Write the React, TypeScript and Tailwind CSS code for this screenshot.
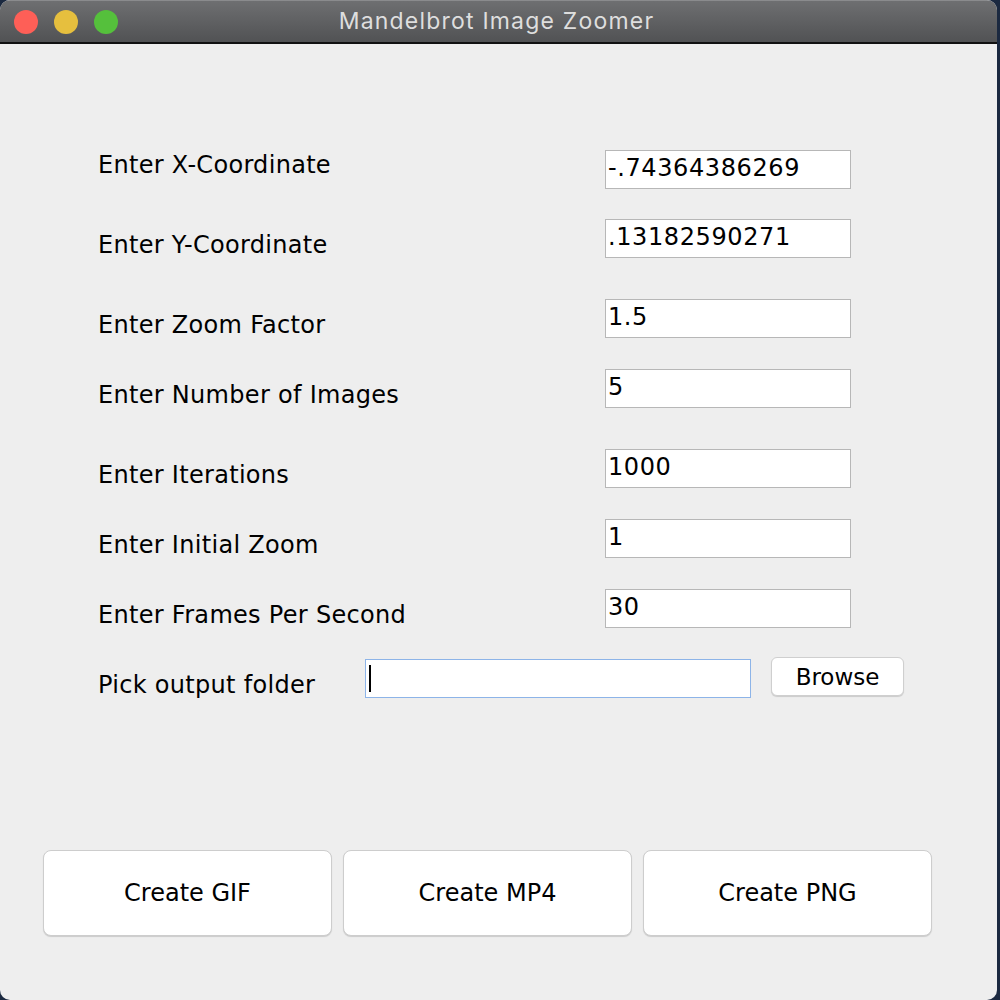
import React from 'react';

const fields = [
  { label: 'Enter X-Coordinate', value: '-.74364386269', gap: 'mt-0', nudge: 'pt-[1px]' },
  { label: 'Enter Y-Coordinate', value: '.13182590271', gap: 'mt-[30px]', nudge: 'pt-[12px]' },
  { label: 'Enter Zoom Factor', value: '1.5', gap: 'mt-[41px]', nudge: 'pt-[12px]' },
  { label: 'Enter Number of Images', value: '5', gap: 'mt-[31px]', nudge: 'pt-[12px]' },
  { label: 'Enter Iterations', value: '1000', gap: 'mt-[41px]', nudge: 'pt-[12px]' },
  { label: 'Enter Initial Zoom', value: '1', gap: 'mt-[31px]', nudge: 'pt-[12px]' },
  { label: 'Enter Frames Per Second', value: '30', gap: 'mt-[31px]', nudge: 'pt-[12px]' },
];

const App = () => {
  return (
    <div className="w-[1000px] h-[1000px] bg-[#1b2940] font-['DejaVu_Sans',sans-serif] text-black">
      <div className="w-[997px] h-[1000px] rounded-[10px] overflow-hidden bg-[#eeeeee] flex flex-col">
        {/* title bar */}
        <div className="h-[44px] shrink-0 grid grid-cols-[1fr_auto_1fr] items-center bg-gradient-to-b from-[#6e6f71] to-[#515254] border-t border-t-[#8a8b8d] border-b-2 border-b-[#111]">
          <div className="flex items-center gap-[16px] pl-[14px]">
            <span className="w-[24px] h-[24px] rounded-full bg-[#fe5f57]" />
            <span className="w-[24px] h-[24px] rounded-full bg-[#e6bf3e]" />
            <span className="w-[24px] h-[24px] rounded-full bg-[#55c03c]" />
          </div>
          <div className="font-['Inter',sans-serif] text-[23px] tracking-[1.2px] text-[#dedede] pr-[4px]">Mandelbrot Image Zoomer</div>
          <div />
        </div>

        {/* form */}
        <div className="pt-[106px] pl-[98px] text-[24px] tracking-[0.3px] leading-[28px]">
          {fields.map((f, i) => (
            <div key={i} className={`flex items-start h-[39px] ${f.gap}`}>
              <div className={`w-[507px] ${f.nudge}`}>{f.label}</div>
              <div className="w-[246px] h-[39px] border border-[#b7b7b7] bg-white pl-[2px] pt-[3px] text-[24px] tracking-[0.6px]">
                {f.value}
              </div>
            </div>
          ))}
          <div className="flex items-start h-[39px] mt-[31px]">
            <div className="w-[267px] pt-[12px]">Pick output folder</div>
            <div className="w-[386px] h-[39px] border border-[#8db4e8] bg-white pl-[3px] pt-[5px]">
              <div className="w-[2px] h-[27px] bg-black" />
            </div>
            <button className="ml-[20px] -mt-[2px] w-[133px] h-[39px] rounded-[6px] bg-white border border-[#cfcfcf] shadow-[0_1px_1px_rgba(0,0,0,0.15)] text-[23px] tracking-normal">
              Browse
            </button>
          </div>
        </div>

        {/* actions */}
        <div className="mt-[152px] pl-[43px] flex gap-[11px]">
          {['Create GIF', 'Create MP4', 'Create PNG'].map((t) => (
            <button
              key={t}
              className="w-[289px] h-[86px] rounded-[8px] bg-white border border-[#cdcdcd] shadow-[0_1px_1px_rgba(0,0,0,0.15)] text-[24px]"
            >
              {t}
            </button>
          ))}
        </div>
      </div>
    </div>
  );
};

export default App;
